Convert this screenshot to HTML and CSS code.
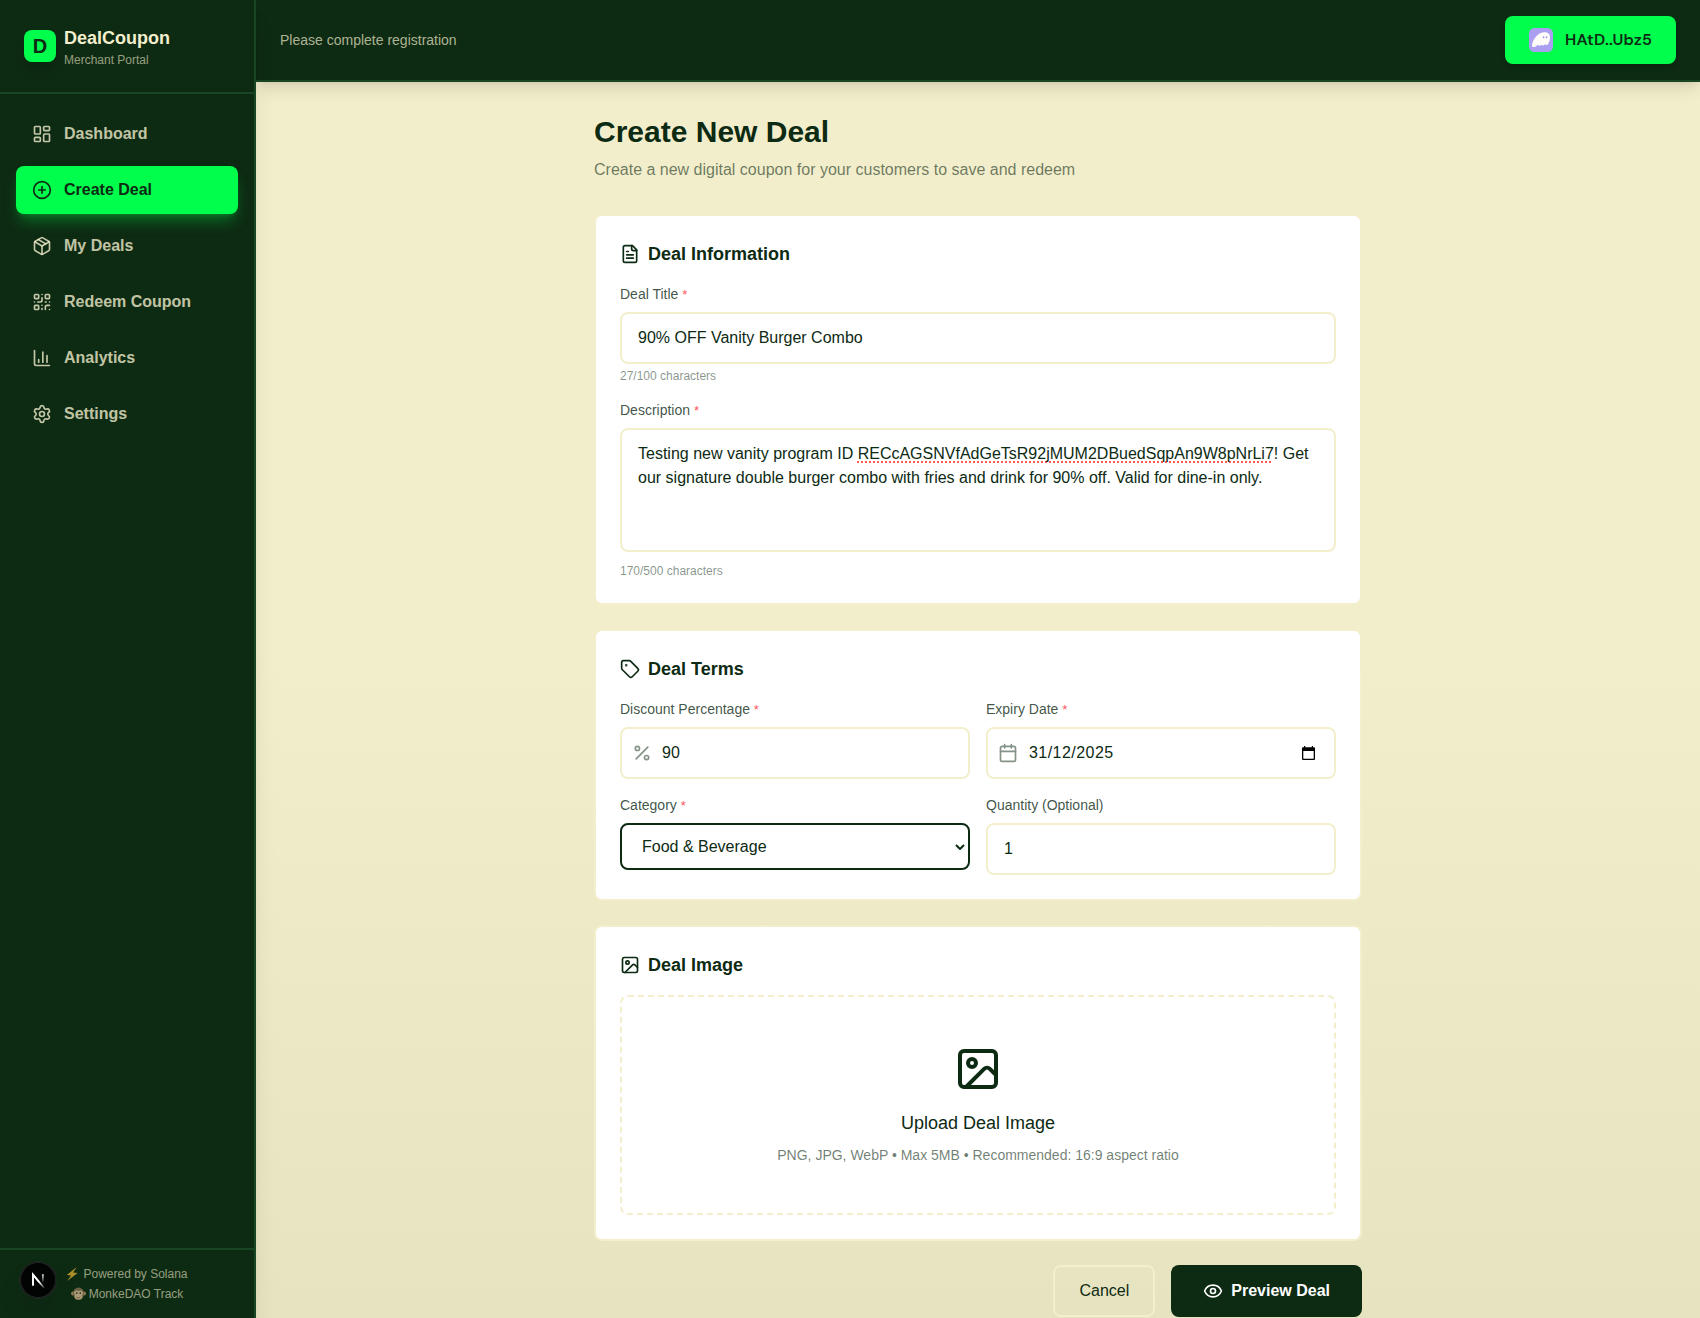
FILE: index.html
```html
<!DOCTYPE html>
<html lang="en">
<head>
<meta charset="utf-8">
<title>DealCoupon – Create New Deal</title>
<link rel="stylesheet" href="styles.css">
</head>
<body>
<div class="app">
  <aside class="sidebar">
    <div class="brand">
      <div class="brand-logo">D</div>
      <div>
        <div class="brand-name">DealCoupon</div>
        <div class="brand-sub">Merchant Portal</div>
      </div>
    </div>
    <nav class="nav">
      <a class="nav-item"><svg class="icon" viewBox="0 0 24 24"><rect width="7" height="9" x="3" y="3" rx="1"/><rect width="7" height="5" x="14" y="3" rx="1"/><rect width="7" height="9" x="14" y="12" rx="1"/><rect width="7" height="5" x="3" y="16" rx="1"/></svg>Dashboard</a>
      <a class="nav-item active"><svg class="icon" viewBox="0 0 24 24"><circle cx="12" cy="12" r="10"/><path d="M8 12h8M12 8v8"/></svg>Create Deal</a>
      <a class="nav-item"><svg class="icon" viewBox="0 0 24 24"><path d="M11 21.73a2 2 0 0 0 2 0l7-4A2 2 0 0 0 21 16V8a2 2 0 0 0-1-1.73l-7-4a2 2 0 0 0-2 0l-7 4A2 2 0 0 0 3 8v8a2 2 0 0 0 1 1.73z"/><path d="M12 22V12"/><path d="M3.29 7 12 12l8.71-5"/><path d="m7.5 4.27 9 5.15"/></svg>My Deals</a>
      <a class="nav-item"><svg class="icon" viewBox="0 0 24 24"><rect width="5" height="5" x="3" y="3" rx="1"/><rect width="5" height="5" x="16" y="3" rx="1"/><rect width="5" height="5" x="3" y="16" rx="1"/><path d="M21 16h-3a2 2 0 0 0-2 2v3M21 21v.01M12 7v3a2 2 0 0 1-2 2H7M3 12h.01M12 3h.01M12 16v.01M16 12h1M21 12v.01M12 21v-1"/></svg>Redeem Coupon</a>
      <a class="nav-item"><svg class="icon" viewBox="0 0 24 24"><path d="M3 3v16a2 2 0 0 0 2 2h16M18 17V9M13 17V5M8 17v-3"/></svg>Analytics</a>
      <a class="nav-item"><svg class="icon" viewBox="0 0 24 24"><path d="M9.671 4.136a2.34 2.34 0 0 1 4.659 0 2.34 2.34 0 0 0 3.319 1.915 2.34 2.34 0 0 1 2.33 4.033 2.34 2.34 0 0 0 0 3.831 2.34 2.34 0 0 1-2.33 4.033 2.34 2.34 0 0 0-3.319 1.915 2.34 2.34 0 0 1-4.659 0 2.34 2.34 0 0 0-3.32-1.915 2.34 2.34 0 0 1-2.33-4.033 2.34 2.34 0 0 0 0-3.831A2.34 2.34 0 0 1 6.35 6.051a2.34 2.34 0 0 0 3.319-1.915"/><circle cx="12" cy="12" r="3"/></svg>Settings</a>
    </nav>
    <div class="powered">
      <div class="powered-line">
        <svg class="bolt" viewBox="0 0 12 14"><path d="M10.800 0 .8 7.900l4.300.6L1.200 14 11.600 5.900l-4.500-.5z"/></svg>
        <span>Powered by Solana</span>
      </div>
      <div class="powered-line">
        <svg class="monkey" viewBox="0 0 16 14"><circle cx="2.200" cy="6.500" r="2.200" fill="#c99a6b"/><circle cx="13.800" cy="6.500" r="2.200" fill="#c99a6b"/><ellipse cx="8" cy="6.800" rx="5.900" ry="6.700" fill="#8b7355"/><ellipse cx="6" cy="6" rx="2.700" ry="2.700" fill="#e0c39a"/><ellipse cx="10" cy="6" rx="2.700" ry="2.700" fill="#e0c39a"/><ellipse cx="8" cy="9.700" rx="4" ry="3.200" fill="#e0c39a"/><circle cx="6.100" cy="6" r=".9" fill="#33221a"/><circle cx="9.900" cy="6" r=".9" fill="#33221a"/><path d="M6 10.600q2 1.400 4 0" fill="none" stroke="#7b4f3c" stroke-width=".8"/></svg>
        <span>MonkeDAO Track</span>
      </div>
    </div>
    <div class="dev-badge">
      <svg width="36" height="36" viewBox="0 0 36 36" fill="none"><defs><linearGradient id="diag" x1="20" y1="20" x2="25" y2="26.5" gradientUnits="userSpaceOnUse"><stop stop-color="#fff"/><stop offset="1" stop-color="#fff" stop-opacity="0"/></linearGradient><linearGradient id="stem" x1="23" y1="12" x2="23" y2="21" gradientUnits="userSpaceOnUse"><stop stop-color="#fff"/><stop offset="1" stop-color="#fff" stop-opacity="0"/></linearGradient></defs><path d="M13 23.6V12.7L24.2 26" stroke="url(#diag)" stroke-width="1.7"/><path d="M13 23.6V12.7l6 7.200" stroke="#fff" stroke-width="1.7"/><path d="M22.9 12.2v9.5" stroke="url(#stem)" stroke-width="1.6"/></svg>
    </div>
  </aside>

  <div class="content">
    <header class="topbar">
      <span class="notice">Please complete registration</span>
      <button class="wallet">
        <svg width="24" height="24" viewBox="0 0 24 24"><rect width="24" height="24" rx="5.500" fill="#ab9ff2"/><path fill="#fffdf8" d="M3 17.600C3.200 12.200 8.600 4.200 15.600 4.200c3.500 0 5.400 2 5.400 5 0 3.600-1.500 7.400-3.200 7.800-.9.200-1.500-.2-1.600-.7-.7.800-1.600 1.200-2.400 1.100-.8 0-1.200-.5-1.200-1-.8.900-1.700 1.300-2.600 1.200-.9-.1-1.300-.5-1.300-1.100-1 1.500-2.300 2.600-4.100 2.600-1 0-1.600-.5-1.600-1.500z"/><ellipse cx="14.600" cy="9.300" rx=".75" ry="1.200" fill="#ab9ff2"/><ellipse cx="17.600" cy="9.300" rx=".75" ry="1.200" fill="#ab9ff2"/></svg>
        <span class="wallet-text">HAtD..Ubz5</span>
      </button>
    </header>

    <main class="page">
      <h1 class="page-title">Create New Deal</h1>
      <p class="page-sub">Create a new digital coupon for your customers to save and redeem</p>

      <form class="form">
        <section class="card">
          <h2 class="card-title"><svg class="icon" viewBox="0 0 24 24"><path d="M15 2H6a2 2 0 0 0-2 2v16a2 2 0 0 0 2 2h12a2 2 0 0 0 2-2V7Z"/><path d="M14 2v4a2 2 0 0 0 2 2h4M10 9H8M16 13H8M16 17H8"/></svg>Deal Information</h2>
          <div class="fields">
            <div>
              <div class="label">Deal Title <span class="req">*</span></div>
              <div class="input">90% OFF Vanity Burger Combo</div>
              <div class="hint">27/100 characters</div>
            </div>
            <div>
              <div class="label">Description <span class="req">*</span></div>
              <div class="input area">
                <div>Testing new vanity program ID <span class="misspelt">RECcAGSNVfAdGeTsR92jMUM2DBuedSqpAn9W8pNrLi7</span>! Get</div>
                <div>our signature double burger combo with fries and drink for 90% off. Valid for dine-in only.</div>
              </div>
              <div class="hint area-hint">170/500 characters</div>
            </div>
          </div>
        </section>

        <section class="card">
          <h2 class="card-title"><svg class="icon" viewBox="0 0 24 24"><path d="M12.586 2.586A2 2 0 0 0 11.172 2H4a2 2 0 0 0-2 2v7.172a2 2 0 0 0 .586 1.414l8.704 8.704a2.426 2.426 0 0 0 3.420 0l6.580-6.580a2.426 2.426 0 0 0 0-3.420z"/><circle cx="7.500" cy="7.500" r=".5" fill="currentColor"/></svg>Deal Terms</h2>
          <div class="terms">
            <div>
              <div class="label">Discount Percentage <span class="req">*</span></div>
              <div class="input with-icon"><svg class="icon faded" viewBox="0 0 24 24"><path d="M19 5 5 19"/><circle cx="6.500" cy="6.500" r="2.500"/><circle cx="17.500" cy="17.500" r="2.500"/></svg>90</div>
            </div>
            <div>
              <div class="label">Expiry Date <span class="req">*</span></div>
              <div class="input with-icon"><svg class="icon faded" viewBox="0 0 24 24"><path d="M8 2v4M16 2v4M3 10h18"/><rect width="18" height="18" x="3" y="4" rx="2"/></svg><span class="date">31/12/2025</span><svg class="picker" viewBox="0 0 13 15"><path d="M0 2.200A1 1 0 0 1 1 1.200h1V0h1.200v1.200h6.600V0H11v1.200h1a1 1 0 0 1 1 1V13a1 1 0 0 1-1 1H1a1 1 0 0 1-1-1zM1.300 5v7.800h10.400V5z" fill-rule="evenodd"/></svg></div>
            </div>
            <div>
              <div class="label">Category <span class="req">*</span></div>
              <div class="input select">Food &amp; Beverage<svg class="chevron" viewBox="0 0 10 6"><path d="m1 1 4 4 4-4"/></svg></div>
            </div>
            <div>
              <div class="label">Quantity (Optional)</div>
              <div class="input">1</div>
            </div>
          </div>
        </section>

        <section class="card">
          <h2 class="card-title"><svg class="icon" viewBox="0 0 24 24"><rect width="18" height="18" x="3" y="3" rx="2"/><circle cx="9" cy="9" r="2"/><path d="m21 15-3.086-3.086a2 2 0 0 0-2.828 0L6 21"/></svg>Deal Image</h2>
          <div class="dropzone">
            <svg class="icon large" viewBox="0 0 24 24"><rect width="18" height="18" x="3" y="3" rx="2"/><circle cx="9" cy="9" r="2"/><path d="m21 15-3.086-3.086a2 2 0 0 0-2.828 0L6 21"/></svg>
            <div class="drop-title">Upload Deal Image</div>
            <div class="drop-sub">PNG, JPG, WebP • Max 5MB • Recommended: 16:9 aspect ratio</div>
          </div>
        </section>

        <div class="actions">
          <button type="button" class="btn cancel">Cancel</button>
          <button type="button" class="btn preview"><svg class="icon" viewBox="0 0 24 24"><path d="M2.062 12.348a1 1 0 0 1 0-.696 10.750 10.750 0 0 1 19.876 0 1 1 0 0 1 0 .696 10.750 10.750 0 0 1-19.876 0"/><circle cx="12" cy="12" r="3"/></svg>Preview Deal</button>
        </div>
      </form>
    </main>
  </div>
</div>
</body>
</html>
```
FILE: styles.css
```css
:root {
  --forest: #0d2a13;
  --green: #184623;
  --cream: #f3efcd;
  --neon: #00ff4d;
}
* { box-sizing: border-box; margin: 0; padding: 0; }
body {
  height: 1318px;
  overflow: hidden;
  font-family: "Liberation Sans", Arial, sans-serif;
  font-size: 16px;
  line-height: 24px;
  color: var(--forest);
}
button { font: inherit; border: 0; }
.app {
  display: flex;
  height: 1318px;
  background: linear-gradient(to bottom, #f2eecb 0%, #f2eecb 50%, #e6e3c0 100%);
}
.icon {
  width: 20px;
  height: 20px;
  flex: none;
  fill: none;
  stroke: currentColor;
  stroke-width: 2;
  stroke-linecap: round;
  stroke-linejoin: round;
}

/* Sidebar */
.sidebar {
  position: relative;
  z-index: 1;
  flex: none;
  display: flex;
  flex-direction: column;
  width: 256px;
  background: var(--forest);
  border-right: 2px solid var(--green);
  box-shadow: 0 20px 25px -5px rgba(0,0,0,.1), 0 8px 10px -6px rgba(0,0,0,.1);
}
.brand {
  display: flex;
  align-items: center;
  gap: 8px;
  padding: 24px;
  border-bottom: 2px solid var(--green);
}
.brand-logo {
  width: 32px;
  height: 32px;
  border-radius: 8px;
  background: var(--neon);
  font-size: 20px;
  font-weight: 700;
  line-height: 32px;
  text-align: center;
  box-shadow: 0 10px 15px -3px rgba(0,0,0,.1), 0 4px 6px -4px rgba(0,0,0,.1);
}
.brand-name { font-size: 18px; line-height: 28px; font-weight: 700; color: var(--cream); }
.brand-sub { font-size: 12px; line-height: 16px; color: rgba(243,239,205,.6); }
.nav { flex: 1; display: flex; flex-direction: column; gap: 8px; padding: 16px; }
.nav-item {
  display: flex;
  align-items: center;
  gap: 12px;
  height: 48px;
  padding: 0 16px;
  border-radius: 8px;
  font-weight: 700;
  color: rgba(243,239,205,.8);
}
.nav-item.active {
  background: var(--neon);
  color: var(--forest);
  box-shadow: 0 10px 15px -3px rgba(0,255,77,.3), 0 4px 6px -4px rgba(0,255,77,.3);
}
.powered {
  display: flex;
  flex-direction: column;
  align-items: center;
  gap: 4px;
  padding: 16px;
  border-top: 2px solid var(--green);
  font-size: 12px;
  line-height: 16px;
  color: rgba(243,239,205,.6);
}
.powered-line { display: flex; align-items: center; }
.bolt { width: 12px; height: 14px; margin-right: 5px; fill: #ad9128; }
.monkey { width: 15px; height: 14px; margin-right: 3px; opacity: .75; }
.dev-badge {
  position: absolute;
  left: 20px;
  bottom: 20px;
  width: 36px;
  height: 36px;
  border-radius: 50%;
  background: #020403;
  box-shadow: 0 0 0 1px #1b2a1f, inset 0 0 0 1px #222624, 0 16px 32px -8px rgba(0,0,0,.24);
}
.dev-badge svg { display: block; }

/* Top bar */
.content { flex: 1; min-width: 0; }
.topbar {
  display: flex;
  align-items: center;
  justify-content: space-between;
  height: 82px;
  padding: 0 24px;
  background: var(--forest);
  border-bottom: 2px solid var(--green);
  box-shadow: 0 10px 15px -3px rgba(0,0,0,.1), 0 4px 6px -4px rgba(0,0,0,.1);
}
.notice { font-size: 14px; line-height: 20px; color: rgba(243,239,205,.7); }
.wallet {
  display: flex;
  align-items: center;
  gap: 12px;
  width: 171px;
  height: 48px;
  padding: 0 24px;
  border-radius: 8px;
  background: var(--neon);
  color: var(--forest);
  white-space: nowrap;
  box-shadow: 0 4px 6px -1px rgba(0,0,0,.1), 0 2px 4px -2px rgba(0,0,0,.1);
}
.wallet svg { flex: none; }
.wallet-text { font-family: "DM Sans", Inter, sans-serif; font-size: 16px; font-weight: 600; letter-spacing: .2px; }

/* Page */
.page { width: 768px; margin: 0 auto; padding-top: 32px; }
.page-title { font-size: 30px; line-height: 36px; font-weight: 700; }
.page-sub { margin-top: 8px; color: rgba(13,42,19,.6); }
.form { display: flex; flex-direction: column; gap: 24px; margin-top: 32px; }
.card { padding: 24px; border: 2px solid var(--cream); border-radius: 8px; background: #fff; }
.card-title {
  display: flex;
  align-items: center;
  gap: 8px;
  margin-bottom: 16px;
  font-size: 18px;
  line-height: 28px;
  font-weight: 700;
}
.fields { display: flex; flex-direction: column; gap: 16px; }
.label { margin-bottom: 8px; font-size: 14px; line-height: 20px; color: rgba(13,42,19,.8); }
.req { font-size: 13px; line-height: 1; color: #fc5660; }
.input {
  height: 52px;
  padding: 12px 16px;
  border: 2px solid var(--cream);
  border-radius: 8px;
}
.area { height: 124px; }
.misspelt { text-decoration: underline dotted #ff5b54 2px; text-underline-offset: 2px; text-decoration-skip-ink: none; }
.hint { margin-top: 4px; font-size: 12px; line-height: 16px; color: rgba(13,42,19,.5); }
.area-hint { margin-top: 11px; }
.terms { display: grid; grid-template-columns: 1fr 1fr; gap: 16px; }
.with-icon { display: flex; align-items: center; gap: 10px; padding: 0 18px 0 10px; }
.faded { opacity: .5; }
.date { flex: 1; padding-left: 1px; letter-spacing: .45px; }
.picker { width: 13px; height: 15px; margin-right: 1px; fill: #000; }
.select {
  display: flex;
  align-items: center;
  justify-content: space-between;
  height: 47px;
  padding: 0 3px 0 20px;
  border-color: var(--forest);
}
.chevron { width: 10px; height: 6px; fill: none; stroke: currentColor; stroke-width: 2; }
.dropzone {
  display: flex;
  flex-direction: column;
  align-items: center;
  padding: 48px;
  border: 2px dashed var(--cream);
  border-radius: 8px;
}
.large { width: 48px; height: 48px; }
.drop-title { margin-top: 16px; font-size: 18px; line-height: 28px; }
.drop-sub { margin-top: 8px; font-size: 14px; line-height: 20px; color: rgba(13,42,19,.6); }
.actions { display: flex; justify-content: flex-end; gap: 16px; }
.btn { display: flex; align-items: center; gap: 8px; height: 52px; border-radius: 8px; }
.cancel { padding: 0 24px; border: 2px solid var(--cream); background: transparent; color: var(--forest); }
.preview { padding: 0 32px; background: var(--forest); color: #fff; font-weight: 700; }
```
